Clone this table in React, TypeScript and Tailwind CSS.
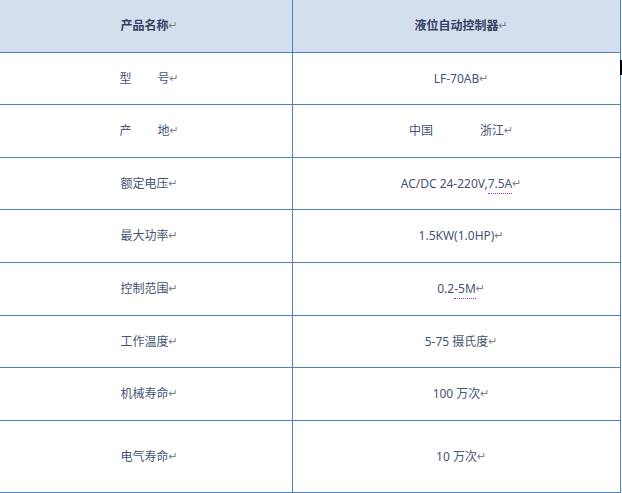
import React from "react";

const rows: { h: string; left: React.ReactNode; right: React.ReactNode }[] = [
  {
    h: "h-[52px]",
    left: (
      <span className="inline-flex gap-[26px]">
        <span>型</span>
        <span>号</span>
      </span>
    ),
    right: "LF-70AB",
  },
  {
    h: "h-[53px]",
    left: (
      <span className="inline-flex gap-[26px]">
        <span>产</span>
        <span>地</span>
      </span>
    ),
    right: (
      <span className="inline-flex gap-[47px]">
        <span>中国</span>
        <span>浙江</span>
      </span>
    ),
  },
  {
    h: "h-[52px]",
    left: "额定电压",
    right: (
      <span>
        AC/DC 24-220V,
        <span className="border-b border-dotted border-[#9a3cb8] pb-[1px]">7.5A</span>
      </span>
    ),
  },
  { h: "h-[53px]", left: "最大功率", right: "1.5KW(1.0HP)" },
  {
    h: "h-[53px]",
    left: "控制范围",
    right: (
      <span>
        0.2
        <span className="border-b border-dotted border-[#c020d0] pb-[1px]">-5M</span>
      </span>
    ),
  },
  { h: "h-[52px]", left: "工作温度", right: "5-75 摄氏度" },
  { h: "h-[53px]", left: "机械寿命", right: "100 万次" },
  { h: "h-[72px]", left: "电气寿命", right: "10 万次" },
];

function Cell({ children, className }: { children: React.ReactNode; className?: string }) {
  return (
    <div className={`flex items-center justify-center ${className ?? ""}`}>
      <span className="relative">
        {children}
        <span
          className="absolute left-full top-0 text-[11px] font-normal text-[#808080] leading-[16px]"
          style={{ fontFamily: '"DejaVu Sans", sans-serif' }}
        >
          ↵
        </span>
      </span>
    </div>
  );
}

export default function App() {
  return (
    <div
      className="relative w-[622px] h-[493px] bg-white text-[12px] leading-[16px] text-[#445472] overflow-hidden"
      style={{ fontFamily: '"Noto Sans", "Noto Sans CJK SC", sans-serif' }}
    >
      <div className="w-[621px] flex flex-col">
        <div className="flex h-[53px] bg-[#d3dfee] border-b border-[#4f81bd] font-bold text-[#34425f]">
          <Cell className="w-[293px] pr-[3px] border-r border-[#4f81bd]">产品名称</Cell>
          <Cell className="w-[328px] border-r border-[#4f81bd]">液位自动控制器</Cell>
        </div>
        {rows.map((r, i) => (
          <div key={i} className={`flex ${r.h} border-b border-[#4f81bd]`}>
            <Cell className="w-[293px] pr-[3px] border-r border-[#4f81bd]">{r.left}</Cell>
            <Cell className="w-[328px] border-r border-[#4f81bd]">{r.right}</Cell>
          </div>
        ))}
      </div>
      <div className="absolute left-[620px] top-[60px] w-[2px] h-[15px] bg-black" />
    </div>
  );
}
